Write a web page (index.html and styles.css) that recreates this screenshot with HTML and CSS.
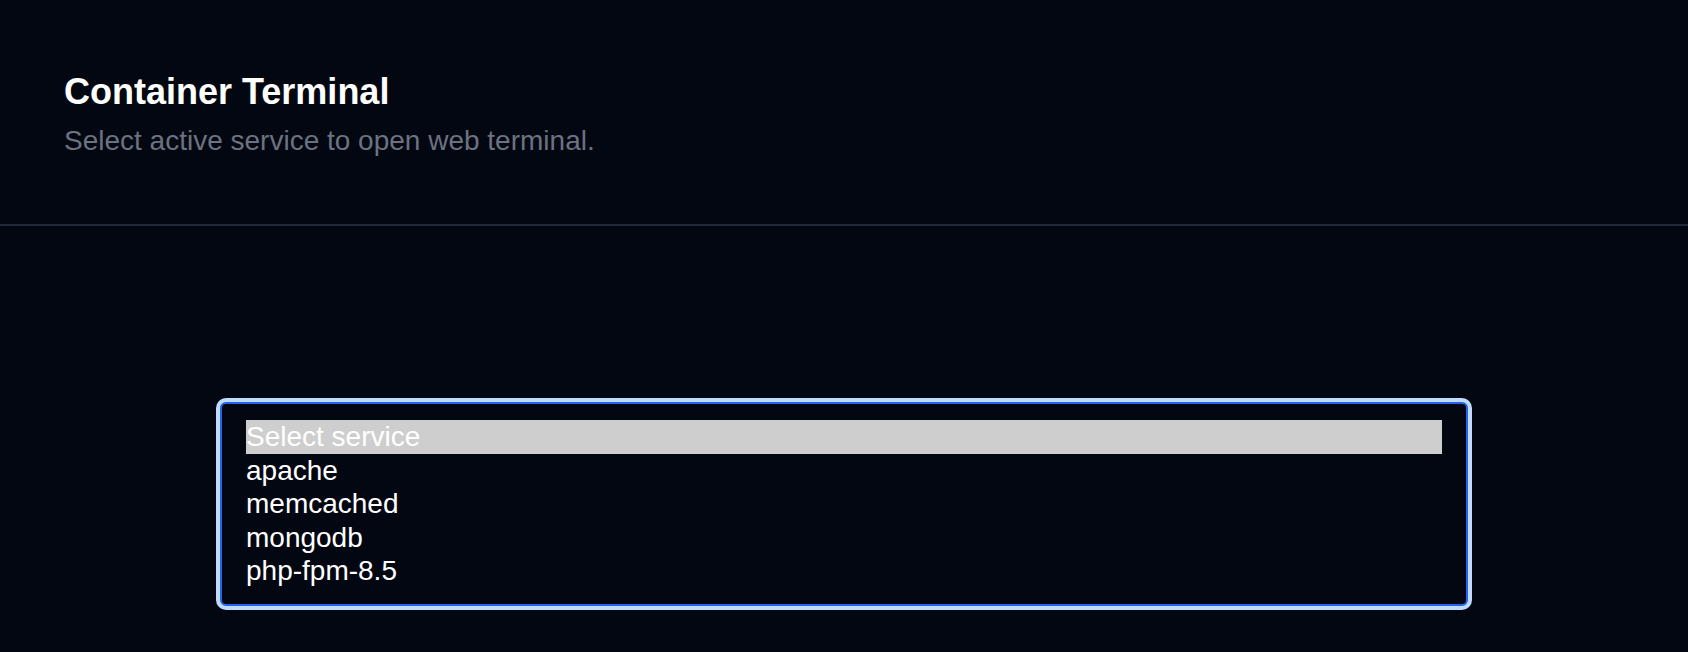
FILE: index.html
```html
<!DOCTYPE html>
<html lang="en">
<head>
<meta charset="utf-8">
<title>Container Terminal</title>
<link rel="stylesheet" href="styles.css">
</head>
<body>
  <header class="page-header">
    <h1 class="title">Container Terminal</h1>
    <p class="subtitle">Select active service to open web terminal.</p>
  </header>
  <main class="page-main">
    <div class="select-wrap">
      <select class="service-select" size="5">
        <option value="" selected>Select service</option>
        <option value="apache">apache</option>
        <option value="memcached">memcached</option>
        <option value="mongodb">mongodb</option>
        <option value="php-fpm-8.5">php-fpm-8.5</option>
      </select>
    </div>
  </main>
</body>
</html>
```

FILE: styles.css
```css
* {
  box-sizing: border-box;
}

html, body {
  margin: 0;
  padding: 0;
  background: #030712;
  height: 100%;
}

body {
  font-family: "Liberation Sans", Arial, sans-serif;
  color: #ffffff;
  overflow: hidden;
}

.page-header {
  padding: 72px 64px 67px;
  border-bottom: 2px solid #1f2937;
}

.title {
  margin: 0;
  font-size: 36px;
  line-height: 40px;
  font-weight: 700;
  color: #ffffff;
}

.subtitle {
  margin: 13px 0 0;
  font-size: 28px;
  line-height: 32px;
  color: #6b7280;
}

.page-main {
  padding: 176px 220px 0;
}

.select-wrap {
  display: flex;
}

.service-select {
  width: 100%;
  font-family: "Liberation Sans", Arial, sans-serif;
  font-size: 28px;
  color: #ffffff;
  background: #030712;
  border: 2px solid #2563eb;
  border-radius: 6px;
  box-shadow: 0 0 0 4px #bfdbfe;
  padding: 16px 24px;
  outline: none;
  overflow: hidden;
}

.service-select option {
  color: #ffffff;
  padding: 1px 0 0;
}
```
